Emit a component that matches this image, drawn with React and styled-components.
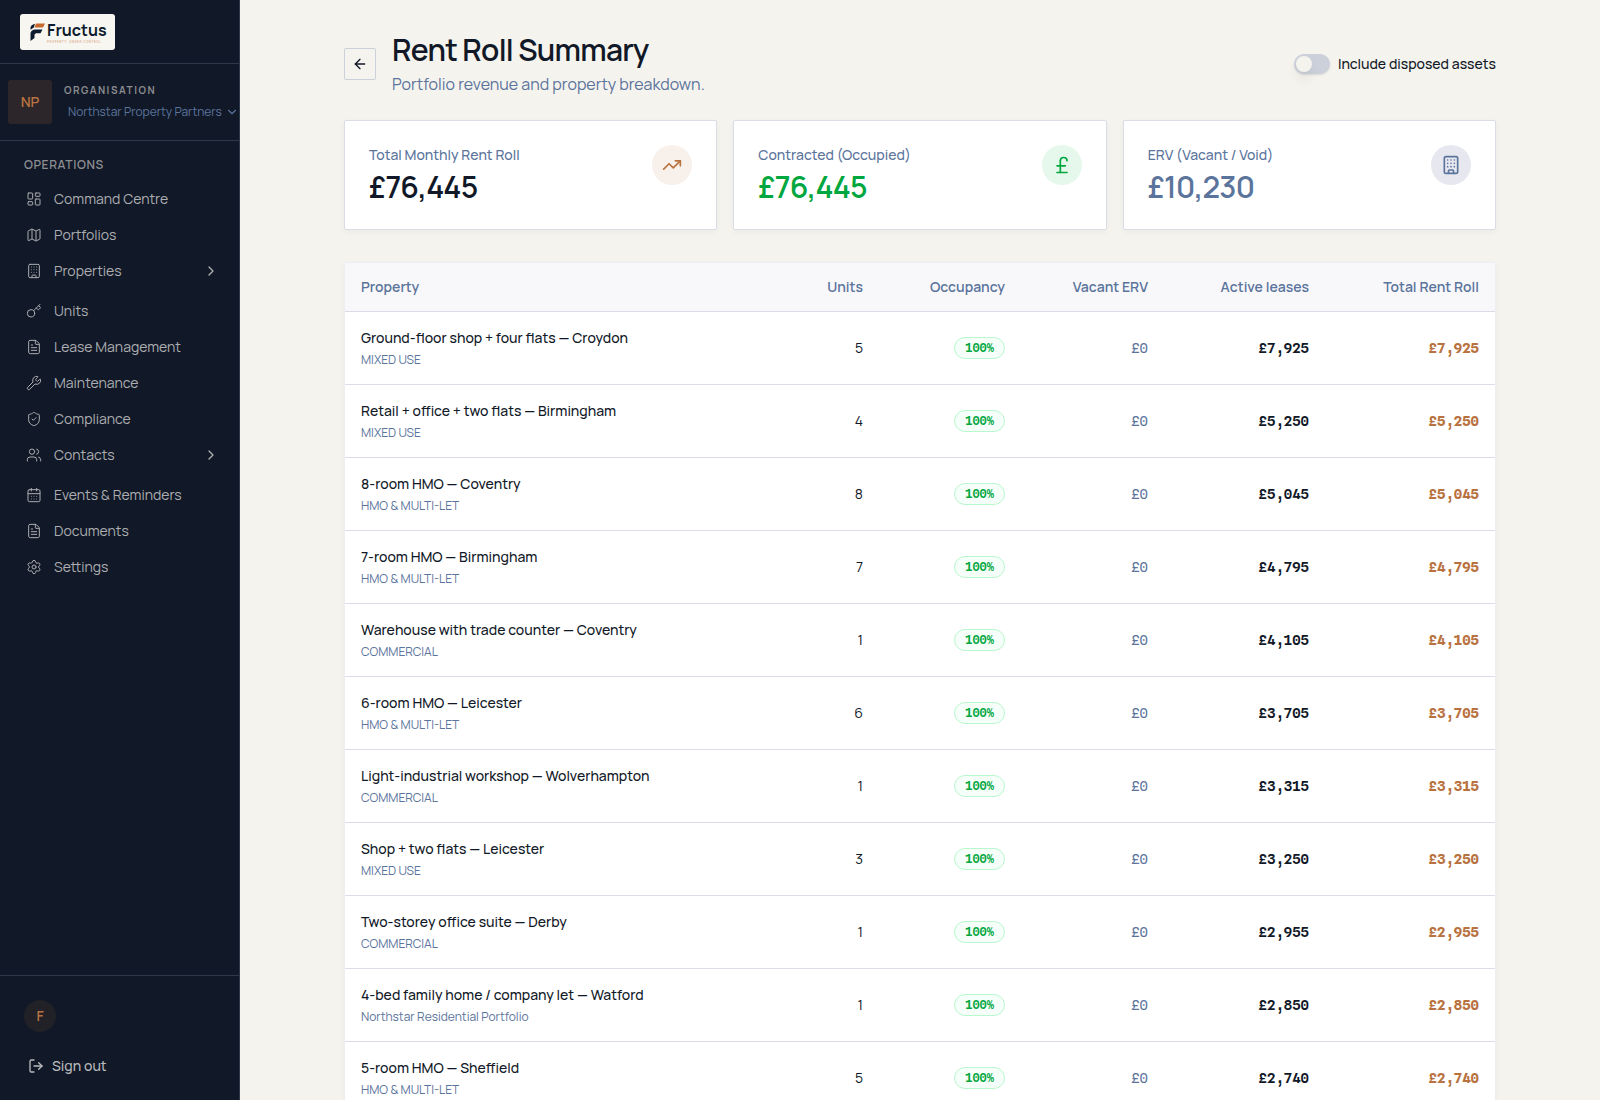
import React, { useState } from "react";
import styled, { createGlobalStyle } from "styled-components";
import {
  ArrowLeft, Building, CalendarDays, ChevronDown, ChevronRight, FileText, Key,
  LayoutDashboard, LogOut, Map, PoundSterling, Settings, ShieldCheck, TrendingUp, Users, Wrench,
} from "lucide-react";

const c = {
  navy: "#111827",
  line: "#2d384a",
  cream: "#f5f3ee",
  muted: "#5b749c",
  copper: "#b87240",
  green: "#00a63e",
  border: "#dadde6",
  nav: "#acaeb1",
};

const mono = `"Spline Sans Mono", "Liberation Mono", monospace`;

const GlobalStyle = createGlobalStyle`
  *, *::before, *::after { box-sizing: border-box; }
  body {
    margin: 0;
    background: ${c.cream};
    color: ${c.navy};
    font-family: Manrope, Inter, "Liberation Sans", sans-serif;
    font-size: 14px;
    line-height: 20px;
  }
  h1, h2, p, ul { margin: 0; padding: 0; }
  button, select { font: inherit; }
`;

const Shell = styled.div`
  display: flex;
  align-items: flex-start;
  height: 100vh;
  overflow: hidden;
`;

const Sidebar = styled.aside`
  display: flex;
  flex-direction: column;
  flex: 0 0 240px;
  height: 100%;
  background: ${c.navy};
  border-right: 1px solid ${c.line};
  color: ${c.nav};
`;

const Brand = styled.div`
  display: flex;
  padding: 14px 20px 13px;
  border-bottom: 1px solid ${c.line};
`;

const LogoLink = styled.a`
  display: flex;
  align-items: center;
  gap: 2px;
  height: 36px;
  padding: 0 8px 0 10px;
  border-radius: 3px;
  background: #f8f6f0;
  color: #0c1b2e;
  text-decoration: none;
`;

const LogoText = styled.span`
  display: flex;
  flex-direction: column;
  font-size: 16px;
  font-weight: 700;
  line-height: 20px;
`;

const Tagline = styled.small`
  color: #d79a78;
  font-size: 3px;
  font-weight: 500;
  line-height: 4px;
  letter-spacing: 0.2em;
`;

const Organisation = styled.div`
  display: flex;
  align-items: center;
  gap: 12px;
  padding: 16px 0 16px 8px;
  border-bottom: 1px solid ${c.line};
`;

const OrgBadge = styled.div`
  display: grid;
  place-items: center;
  flex: none;
  width: 44px;
  height: 44px;
  border-radius: 3px;
  background: #2c262b;
  color: ${c.copper};
  font-weight: 600;
`;

const OrgPicker = styled.div`
  flex: 1;
  min-width: 0;
`;

const OrgLabel = styled.label`
  display: block;
  color: #8b8d91;
  font-size: 10px;
  font-weight: 700;
  line-height: 20px;
  letter-spacing: 0.15em;
`;

const SelectWrap = styled.div`
  display: grid;
  grid-template-columns: 1fr 14px;
  align-items: center;
  color: ${c.muted};
`;

const OrgSelect = styled.select`
  grid-area: 1 / 1 / 2 / 3;
  appearance: none;
  min-width: 0;
  height: 24px;
  padding: 0 0 0 4px;
  border: 0;
  background: transparent;
  color: inherit;
  font-size: 12px;
`;

const SelectArrow = styled(ChevronDown)`
  grid-area: 1 / 2;
  pointer-events: none;
`;

const Nav = styled.nav`
  flex: 1;
  padding: 14px 16px;
`;

const NavHeading = styled.h2`
  padding: 0 8px 6px;
  color: #8b8d91;
  font-size: 12px;
  font-weight: 600;
  line-height: 20px;
  letter-spacing: 0.05em;
`;

const NavList = styled.ul`
  list-style: none;
`;

const NavItem = styled.li`
  margin-bottom: ${(p) => (p.$group ? "4px" : "0")};
`;

const NavLink = styled.a`
  display: flex;
  align-items: center;
  gap: 12px;
  height: 36px;
  padding: 0 4px 0 10px;
  color: inherit;
  text-decoration: none;

  span { flex: 1; }
`;

const Account = styled.div`
  display: flex;
  flex-direction: column;
  align-items: flex-start;
  gap: 16px;
  padding: 24px 24px 16px;
  border-top: 1px solid ${c.line};
`;

const UserBadge = styled.div`
  display: grid;
  place-items: center;
  width: 32px;
  height: 32px;
  border-radius: 50%;
  background: #222128;
  color: ${c.copper};
  font-weight: 600;
`;

const SignOut = styled.button`
  display: flex;
  align-items: center;
  gap: 8px;
  height: 36px;
  padding: 0 4px;
  border: 0;
  background: transparent;
  color: #b9babd;
  font-weight: 500;
`;

const Main = styled.main`
  flex: 1;
  min-width: 0;
  height: 100%;
  overflow: hidden;
  padding: 32px;
`;

const Content = styled.div`
  max-width: 1152px;
  margin: 0 auto;
`;

const PageHeader = styled.header`
  display: flex;
  align-items: center;
  gap: 16px;
  margin-bottom: 24px;
`;

const BackButton = styled.button`
  display: grid;
  place-items: center;
  width: 32px;
  height: 32px;
  padding: 0;
  border: 1px solid #cbd0da;
  border-radius: 2px;
  background: transparent;
  color: ${c.navy};
`;

const Heading = styled.div`
  flex: 1;
`;

const Title = styled.h1`
  font-size: 30px;
  font-weight: 600;
  line-height: 36px;
  letter-spacing: -0.025em;
`;

const Subtitle = styled.p`
  margin-top: 4px;
  color: ${c.muted};
  font-size: 16px;
  line-height: 24px;
`;

const SwitchLabel = styled.label`
  display: flex;
  align-items: center;
  gap: 8px;
  font-weight: 500;
`;

const Switch = styled.input`
  appearance: none;
  display: flex;
  align-items: center;
  width: 36px;
  height: 20px;
  margin: 0;
  padding: 2px;
  border-radius: 10px;
  background: #cbd0da;
  box-shadow: 0 1px 2px rgba(17, 24, 39, 0.12);

  &::before {
    content: "";
    width: 16px;
    height: 16px;
    border-radius: 50%;
    background: ${c.cream};
    box-shadow: 0 8px 12px rgba(17, 24, 39, 0.06);
  }

  &:checked {
    justify-content: flex-end;
    background: ${c.copper};
  }
`;

const Cards = styled.section`
  display: grid;
  grid-template-columns: repeat(3, 1fr);
  gap: 16px;
  margin-bottom: 32px;
`;

const Card = styled.article`
  display: flex;
  justify-content: space-between;
  padding: 24px;
  border: 1px solid ${c.border};
  border-radius: 2px;
  background: #fff;
  box-shadow: 0 2px 6px rgba(17, 24, 39, 0.04);
`;

const CardLabel = styled.p`
  color: ${c.muted};
  font-weight: 500;
`;

const CardValue = styled.p`
  margin-top: 4px;
  color: ${(p) => p.$color};
  font-size: 30px;
  font-weight: 600;
  line-height: 36px;
  letter-spacing: -0.025em;
`;

const CardIcon = styled.div`
  display: grid;
  place-items: center;
  width: 40px;
  height: 40px;
  border-radius: 50%;
  background: ${(p) => p.$bg};
  color: ${(p) => p.$color};
`;

const TableCard = styled.section`
  border: 1px solid #eceef2;
  border-bottom: 0;
  border-radius: 2px;
  background: #fff;
  box-shadow: 0 2px 6px rgba(17, 24, 39, 0.04);
`;

const Table = styled.table`
  width: 100%;
  table-layout: fixed;
  border-collapse: separate;
  border-spacing: 0;
`;

const Th = styled.th`
  width: ${(p) => p.$width || "auto"};
  height: 49px;
  padding: 0 16px;
  border-bottom: 1px solid ${c.border};
  background: #f8f8fb;
  color: ${c.muted};
  font-weight: 600;
  text-align: ${(p) => (p.$start ? "left" : "right")};
`;

const Td = styled.td`
  height: 73px;
  padding: 0 16px;
  border-bottom: 1px solid ${c.border};
  text-align: ${(p) => (p.$start ? "left" : "right")};
`;

const Money = styled.span`
  color: ${(p) => p.$color};
  font-family: ${mono};
  font-weight: ${(p) => p.$weight || 400};
`;

const PropertyName = styled.div`
  font-weight: 500;
  line-height: 20px;
`;

const PropertyType = styled.div`
  margin-top: 4px;
  color: ${c.muted};
  font-size: 12px;
  line-height: 16px;
`;

const Pill = styled.span`
  display: inline-flex;
  vertical-align: middle;
  padding: 2px 10px;
  border: 1px solid #b9f8cf;
  border-radius: 11px;
  background: #f5fef8;
  color: ${c.green};
  font-family: ${mono};
  font-size: 12px;
  font-weight: 600;
  line-height: 16px;
`;

const navItems = [
  ["Command Centre", LayoutDashboard],
  ["Portfolios", Map],
  ["Properties", Building, true],
  ["Units", Key],
  ["Lease Management", FileText],
  ["Maintenance", Wrench],
  ["Compliance", ShieldCheck],
  ["Contacts", Users, true],
  ["Events & Reminders", CalendarDays],
  ["Documents", FileText],
  ["Settings", Settings],
];

const cards = [
  { label: "Total Monthly Rent Roll", value: "£76,445", icon: TrendingUp, text: c.navy, color: c.copper, bg: "#f8f0eb" },
  { label: "Contracted (Occupied)", value: "£76,445", icon: PoundSterling, text: c.green, color: c.green, bg: "#e5f8eb" },
  { label: "ERV (Vacant / Void)", value: "£10,230", icon: Building, text: c.muted, color: c.muted, bg: "#e7e8ef" },
];

const properties = [
  ["Ground-floor shop + four flats — Croydon", "MIXED USE", 5, "£7,925"],
  ["Retail + office + two flats — Birmingham", "MIXED USE", 4, "£5,250"],
  ["8-room HMO — Coventry", "HMO & MULTI-LET", 8, "£5,045"],
  ["7-room HMO — Birmingham", "HMO & MULTI-LET", 7, "£4,795"],
  ["Warehouse with trade counter — Coventry", "COMMERCIAL", 1, "£4,105"],
  ["6-room HMO — Leicester", "HMO & MULTI-LET", 6, "£3,705"],
  ["Light-industrial workshop — Wolverhampton", "COMMERCIAL", 1, "£3,315"],
  ["Shop + two flats — Leicester", "MIXED USE", 3, "£3,250"],
  ["Two-storey office suite — Derby", "COMMERCIAL", 1, "£2,955"],
  ["4-bed family home / company let — Watford", "Northstar Residential Portfolio", 1, "£2,850"],
  ["5-room HMO — Sheffield", "HMO & MULTI-LET", 5, "£2,740"],
];

function LogoMark() {
  return (
    <svg width="15" height="18" viewBox="0 0 15 18" aria-hidden="true">
      <path d="M6 0.5H15L13 4.5H4.5Z" fill="#c8682f" />
      <path d="M5 0.8L3.8 4.5L0.5 6.8V4.8Q0.8 1.8 5 0.8Z" fill="#0c1b2e" />
      <path d="M4.5 6.5H12.5L10.5 10.2H6L4.5 11.5V15L0.5 18V10Q1.2 7 4.5 6.5Z" fill="#0c1b2e" />
    </svg>
  );
}

export default function App() {
  const [includeDisposed, setIncludeDisposed] = useState(false);

  return (
    <>
      <GlobalStyle />
      <Shell>
        <Sidebar>
          <Brand>
            <LogoLink href="#">
              <LogoMark />
              <LogoText>
                Fructus
                <Tagline>PROPERTY. UNDER CONTROL.</Tagline>
              </LogoText>
            </LogoLink>
          </Brand>
          <Organisation>
            <OrgBadge>NP</OrgBadge>
            <OrgPicker>
              <OrgLabel htmlFor="organisation">ORGANISATION</OrgLabel>
              <SelectWrap>
                <OrgSelect id="organisation">
                  <option>Northstar Property Partners</option>
                </OrgSelect>
                <SelectArrow size={14} />
              </SelectWrap>
            </OrgPicker>
          </Organisation>
          <Nav>
            <NavHeading>OPERATIONS</NavHeading>
            <NavList>
              {navItems.map(([label, Icon, group]) => (
                <NavItem key={label} $group={group}>
                  <NavLink href="#">
                    <Icon size={16} strokeWidth={1.5} />
                    <span>{label}</span>
                    {group && <ChevronRight size={16} />}
                  </NavLink>
                </NavItem>
              ))}
            </NavList>
          </Nav>
          <Account>
            <UserBadge>F</UserBadge>
            <SignOut type="button">
              <LogOut size={16} />
              Sign out
            </SignOut>
          </Account>
        </Sidebar>
        <Main>
          <Content>
            <PageHeader>
              <BackButton type="button" aria-label="Back">
                <ArrowLeft size={16} />
              </BackButton>
              <Heading>
                <Title>Rent Roll Summary</Title>
                <Subtitle>Portfolio revenue and property breakdown.</Subtitle>
              </Heading>
              <SwitchLabel>
                <Switch
                  type="checkbox"
                  role="switch"
                  checked={includeDisposed}
                  onChange={(e) => setIncludeDisposed(e.target.checked)}
                />
                Include disposed assets
              </SwitchLabel>
            </PageHeader>
            <Cards>
              {cards.map(({ label, value, icon: Icon, text, color, bg }) => (
                <Card key={label}>
                  <div>
                    <CardLabel>{label}</CardLabel>
                    <CardValue $color={text}>{value}</CardValue>
                  </div>
                  <CardIcon $bg={bg} $color={color}>
                    <Icon size={20} />
                  </CardIcon>
                </Card>
              ))}
            </Cards>
            <TableCard>
              <Table>
                <thead>
                  <tr>
                    <Th $start>Property</Th>
                    <Th $width="112px">Units</Th>
                    <Th $width="142px">Occupancy</Th>
                    <Th $width="143px">Vacant ERV</Th>
                    <Th $width="161px">Active leases</Th>
                    <Th $width="170px">Total Rent Roll</Th>
                  </tr>
                </thead>
                <tbody>
                  {properties.map(([name, type, units, rent]) => (
                    <tr key={name}>
                      <Td $start>
                        <PropertyName>{name}</PropertyName>
                        <PropertyType>{type}</PropertyType>
                      </Td>
                      <Td>{units}</Td>
                      <Td><Pill>100%</Pill></Td>
                      <Td><Money $color={c.muted}>£0</Money></Td>
                      <Td><Money $color={c.navy} $weight={600}>{rent}</Money></Td>
                      <Td><Money $color={c.copper} $weight={700}>{rent}</Money></Td>
                    </tr>
                  ))}
                </tbody>
              </Table>
            </TableCard>
          </Content>
        </Main>
      </Shell>
    </>
  );
}
